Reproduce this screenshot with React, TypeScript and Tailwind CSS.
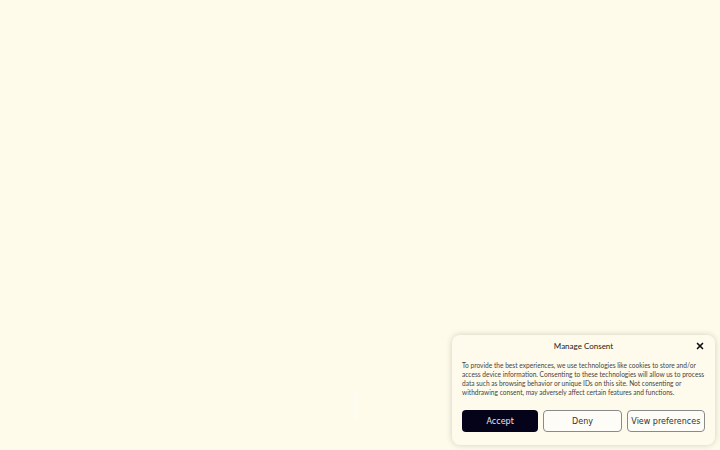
import { X } from "lucide-react";

export default function App() {
  const btn =
    "flex h-[22px] flex-1 items-center justify-center whitespace-nowrap rounded-[4px] pt-px text-[8px] leading-none";

  return (
    <div className="relative h-[450px] w-[720px] overflow-hidden bg-[#fefbeb] font-['Lato',sans-serif]">
      {/* faint leftover block */}
      <div className="absolute left-[354px] top-[390px] h-[30px] w-[4px] bg-[#ffffff] opacity-30" />

      <div className="absolute bottom-[5px] right-[5px] w-[263px] rounded-[8px] bg-[#fffbec] px-[10px] pb-[13px] pt-[6px] shadow-[0_0_6px_rgba(0,0,0,0.18)]">
        <div className="relative flex h-[10px] items-center justify-center">
          <span className="text-[8px] text-[#222]">Manage Consent</span>
          <X size={10} strokeWidth={4} className="absolute right-0 text-[#111]" />
        </div>
        <p className="mt-[10px] text-[6.6px] leading-[9px] text-[#444]">
          To provide the best experiences, we use technologies like cookies to store and/or access
          device information. Consenting to these technologies will allow us to process data such
          as browsing behavior or unique IDs on this site. Not consenting or withdrawing consent,
          may adversely affect certain features and functions.
        </p>
        <div className="mt-[13px] flex gap-[5px] font-['DejaVu_Sans',sans-serif]">
          <button className={`${btn} bg-[#05031a] text-[#e8e8f0]`}>Accept</button>
          <button className={`${btn} border border-[#8a8a8a] bg-[#fdfcf6] text-[#333]`}>Deny</button>
          <button className={`${btn} border border-[#8a8a8a] bg-[#fdfcf6] text-[#333]`}>
            View preferences
          </button>
        </div>
      </div>
    </div>
  );
}
